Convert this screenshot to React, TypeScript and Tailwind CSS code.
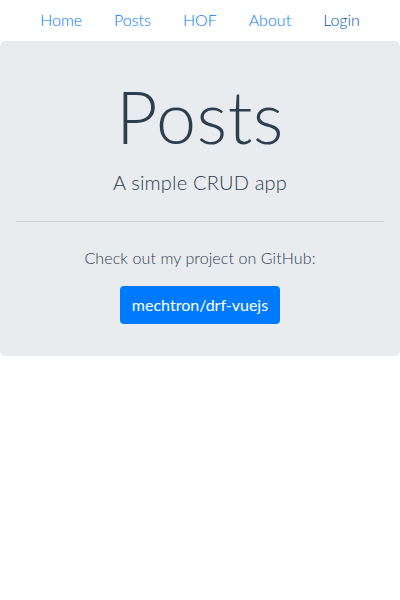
import React from 'react';

const links = ['Home', 'Posts', 'HOF', 'About'];

export default function App() {
  return (
    <div className="min-h-[600px] bg-white text-[#2c3e50]" style={{ fontFamily: 'Lato, "Open Sans", Arial, sans-serif' }}>
      {/* nav */}
      <ul className="flex justify-center text-base leading-6 font-light">
        {links.map(l => (
          <li key={l}>
            <a href="#" className="block px-4 py-2 text-[#007bff]">{l}</a>
          </li>
        ))}
        <li>
          <a href="#" className="block px-4 py-2 text-[#0056b3]">Login</a>
        </li>
      </ul>

      {/* jumbotron */}
      <div className="mt-px bg-[#e9ecef] rounded-[5px] px-4 py-8 text-center">
        <h1 className="text-[72px] font-light leading-[1.2] mb-2 tracking-[0.5px]">Posts</h1>
        <p className="text-xl leading-[1.5] font-light tracking-[0.2px]">A simple CRUD app</p>
        <hr className="my-6 border-0 border-t border-black/10" />
        <p className="text-base leading-6 mb-4 font-light tracking-[0.1px]">Check out my project on GitHub:</p>
        <a href="#" className="inline-block bg-[#007bff] text-white text-base leading-6 px-3 py-[7px] rounded">
          mechtron/drf-vuejs
        </a>
      </div>
    </div>
  );
}
